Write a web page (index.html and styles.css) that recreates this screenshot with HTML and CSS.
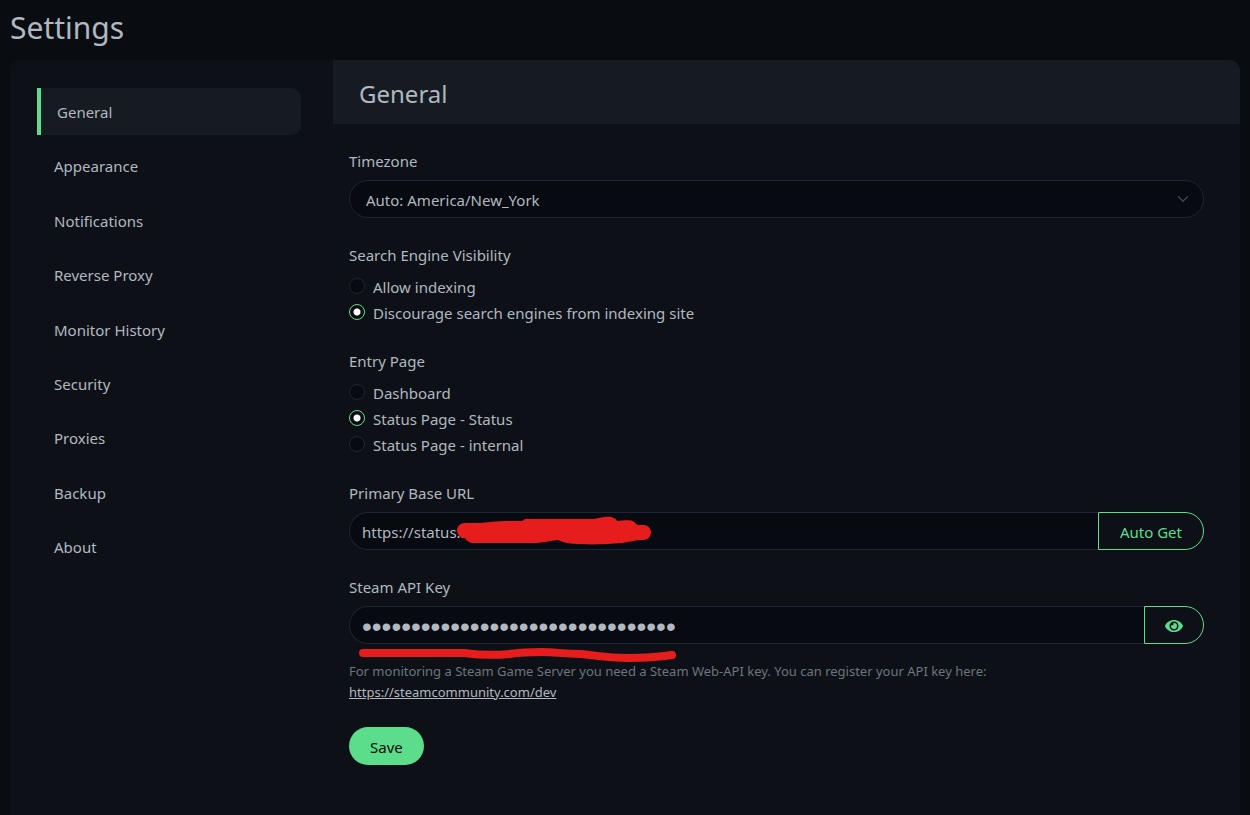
FILE: index.html
```html
<!DOCTYPE html>
<html lang="en">
<head>
<meta charset="utf-8">
<meta name="viewport" content="width=device-width, initial-scale=1">
<title>Settings</title>
<link rel="stylesheet" href="styles.css">
</head>
<body>
<main class="page">
  <h1 class="page-title">Settings</h1>
  <div class="panel">
    <nav class="menu" aria-label="Settings">
      <a class="menu-item active" href="#general" aria-current="page">General</a>
      <a class="menu-item" href="#appearance">Appearance</a>
      <a class="menu-item" href="#notifications">Notifications</a>
      <a class="menu-item" href="#reverse-proxy">Reverse Proxy</a>
      <a class="menu-item" href="#monitor-history">Monitor History</a>
      <a class="menu-item" href="#security">Security</a>
      <a class="menu-item" href="#proxies">Proxies</a>
      <a class="menu-item" href="#backup">Backup</a>
      <a class="menu-item" href="#about">About</a>
    </nav>
    <section class="content">
      <h2 class="content-title">General</h2>
      <form class="form">
        <div class="group">
          <label class="label" for="timezone">Timezone</label>
          <div class="field">
            <select class="control select" id="timezone">
              <option>Auto: America/New_York</option>
            </select>
            <svg class="chevron" viewBox="0 0 16 16" width="12" height="12" aria-hidden="true"><path d="M2 5l6 6 6-6" fill="none" stroke="#3d434a" stroke-width="2" stroke-linecap="round" stroke-linejoin="round"/></svg>
          </div>
        </div>

        <fieldset class="group">
          <legend class="label">Search Engine Visibility</legend>
          <div class="choices">
            <label class="choice"><input class="radio" type="radio" name="index">Allow indexing</label>
            <label class="choice"><input class="radio" type="radio" name="index" checked>Discourage search engines from indexing site</label>
          </div>
        </fieldset>

        <fieldset class="group">
          <legend class="label">Entry Page</legend>
          <div class="choices">
            <label class="choice"><input class="radio" type="radio" name="entry">Dashboard</label>
            <label class="choice"><input class="radio" type="radio" name="entry" checked>Status Page - Status</label>
            <label class="choice"><input class="radio" type="radio" name="entry">Status Page - internal</label>
          </div>
        </fieldset>

        <div class="group">
          <label class="label" for="base-url">Primary Base URL</label>
          <div class="field">
            <input class="control joined" id="base-url" type="text" value="https://status..">
            <button class="addon" type="button">Auto Get</button>
            <svg class="mark redaction" viewBox="0 0 196 30" width="196" height="30" aria-hidden="true"><path d="M8 7 C20 7 28 7 34 6 C46 5 56 5 66 5 Q69 2 74 3 L137 3 C144 2 150 0 155 1 Q160 2 161 5 C167 5 174 3 178 6 Q181 8 181 9 H187 A7 7 0 0 1 188 24 C178 24 174 26 166 27 C146 29 114 29 107 26 L102 24 C90 25 88 27 76 27 L16 27 Q11 26 9 22 A7 7 0 0 1 8 7Z" fill="#e71d1d"/></svg>
          </div>
        </div>

        <div class="group">
          <label class="label" for="steam-key">Steam API Key</label>
          <div class="field">
            <input class="control joined secret" id="steam-key" type="password" value="0123456789abcdef0123456789abcdef">
            <button class="addon reveal" type="button" aria-label="Show key"><svg class="eye" viewBox="0 0 576 512" width="18" height="16" aria-hidden="true"><path fill="currentColor" d="M572.52 241.4C518.29 135.59 410.93 64 288 64S57.68 135.64 3.48 241.41a32.35 32.35 0 0 0 0 29.19C57.71 376.41 165.07 448 288 448s230.32-71.64 284.52-177.41a32.35 32.35 0 0 0 0-29.19zM288 400a144 144 0 1 1 144-144 143.93 143.93 0 0 1-144 144zm0-240a95.31 95.31 0 0 0-25.31 3.79 47.85 47.85 0 0 1-66.9 66.9A95.78 95.78 0 1 0 288 160z"/></svg></button>
            <svg class="mark underline" viewBox="0 0 320 16" width="320" height="16" aria-hidden="true"><path d="M6 5 H107 C122 7 142 7 152 6 Q166 4 185 4 C199 4 205 6 224 6 C244 8 249 10 270 10 C290 10 302 9 315 7" fill="none" stroke="#e71d1d" stroke-width="8" stroke-linecap="round" stroke-linejoin="round"/></svg>
          </div>
          <p class="help">For monitoring a Steam Game Server you need a Steam Web-API key. You can register your API key here: <a class="help-link" href="https://steamcommunity.com/dev">https://steamcommunity.com/dev</a></p>
        </div>

        <button class="save" type="submit">Save</button>
      </form>
    </section>
  </div>
</main>
</body>
</html>
```
FILE: styles.css
```css
* {
  box-sizing: border-box;
}

body {
  margin: 0;
  background: #090c10;
  color: #b1b8c0;
  font: 15px/24px "Noto Sans", "Open Sans", sans-serif;
}

.page {
  display: flex;
  flex-direction: column;
  min-height: 100vh;
  padding: 8px 10px 0;
}

.page-title {
  margin: 0 0 12px;
  font-size: 30px;
  font-weight: 400;
  line-height: 40px;
}

.panel {
  display: flex;
  flex: 1;
  overflow: hidden;
  border-radius: 10px 10px 0 0;
  background: #0d1117;
}

.menu {
  display: flex;
  flex: 0 0 323px;
  flex-direction: column;
  justify-content: space-between;
  align-self: flex-start;
  min-height: 510px;
  padding: 28px 32px 0 27px;
}

.menu-item {
  padding: 12px 17px 11px;
  border-radius: 10px;
  color: inherit;
  text-decoration: none;
}

.menu-item.active {
  padding-left: 16px;
  border-left: 4px solid #5cdd8b;
  border-radius: 0 10px 10px 0;
  background: #161b22;
}

.content {
  flex: 1;
  min-width: 0;
}

.content-title {
  margin: 0;
  padding: 16px 26px 12px;
  background: #161b22;
  font-size: 24px;
  font-weight: 400;
  line-height: 36px;
}

.form {
  padding: 24px 36px 24px 16px;
}

.group {
  min-width: 0;
  margin: 0 0 24px;
  padding: 0;
  border: 0;
}

.label {
  display: block;
  margin: 0 0 8px;
  padding: 2px 0 0;
  line-height: 22px;
}

.field {
  position: relative;
  display: flex;
}

.control {
  flex: 1;
  min-width: 0;
  height: 38px;
  margin: 0;
  padding: 2px 12px 0;
  border: 1px solid #1d2634;
  border-radius: 19px;
  outline: 0;
  background: #070a10;
  color: inherit;
  font: inherit;
}

.select {
  padding: 2px 36px 0 16px;
  appearance: none;
}

.chevron {
  position: absolute;
  top: 13px;
  right: 15px;
  pointer-events: none;
}

.joined {
  border-right: 0;
  border-radius: 19px 0 0 19px;
}

.secret {
  padding-top: 4px;
  font-family: "Liberation Sans", sans-serif;
  font-size: 28px;
}

.addon {
  display: flex;
  align-items: center;
  justify-content: center;
  height: 38px;
  padding: 2px 21px 0;
  border: 1px solid #5cdd8b;
  border-radius: 0 19px 19px 0;
  background: transparent;
  color: #5cdd8b;
  font: inherit;
}

.reveal {
  padding: 2px 20px 0;
}

.mark {
  position: absolute;
  pointer-events: none;
}

.redaction {
  top: 4px;
  left: 107px;
}

.underline {
  top: 42px;
  left: 8px;
}

.choices {
  display: grid;
  gap: 2px;
}

.choice {
  display: flex;
  gap: 8px;
  padding-top: 2px;
  line-height: 22px;
}

.radio {
  flex: none;
  width: 16px;
  height: 16px;
  margin: 2px 0 0;
  border: 1px solid #1d2634;
  border-radius: 50%;
  appearance: none;
  background: #070a10;
}

.radio:checked {
  border-color: #5cdd8b;
  background: radial-gradient(circle, #fff 3px, #070a10 4px);
}

.help {
  margin: 16px 0 0;
  padding-top: 1px;
  color: #6c757d;
  font-size: 13px;
  line-height: 21px;
}

.help-link {
  display: table;
  color: #b1b8c0;
}

.save {
  height: 38px;
  padding: 2px 21px 0;
  border: 0;
  border-radius: 19px;
  background: #5cdd8b;
  color: #020b05;
  font: inherit;
}
```
